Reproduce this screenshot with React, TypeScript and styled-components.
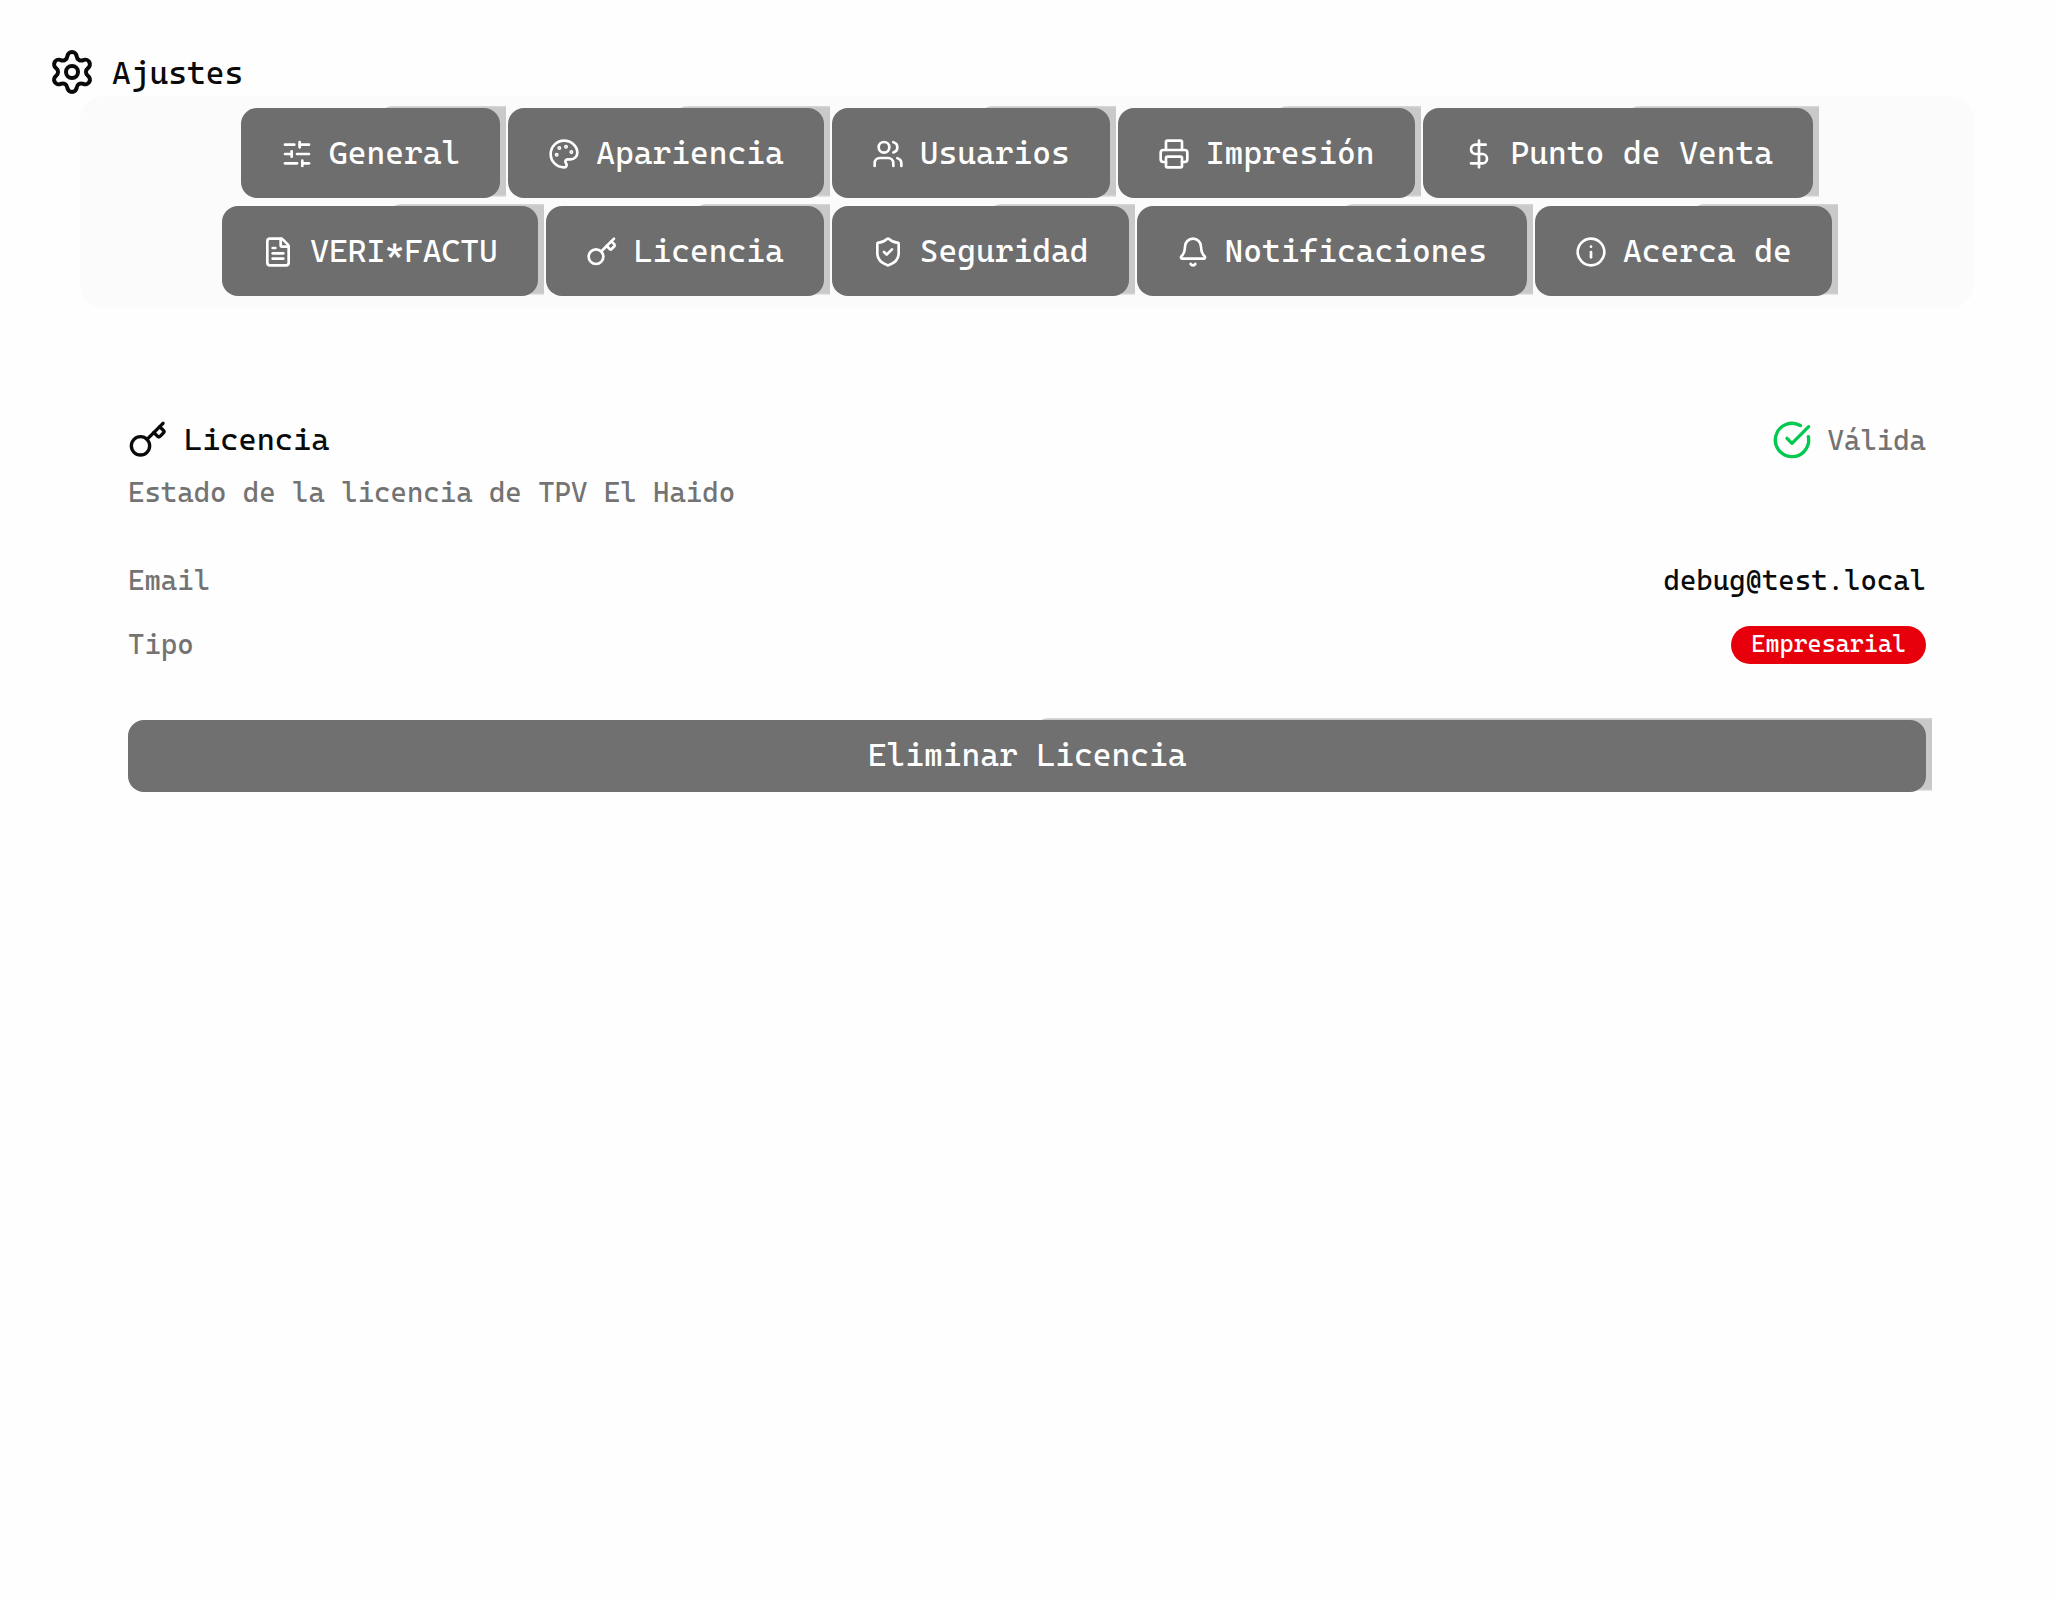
import React from 'react';
import styled, { createGlobalStyle } from 'styled-components';
import {
  Bell,
  CircleCheckBig,
  DollarSign,
  FileText,
  Info,
  Key,
  Palette,
  Printer,
  Settings,
  ShieldCheck,
  SlidersHorizontal,
  Users,
} from 'lucide-react';
import type { LucideIcon } from 'lucide-react';

const ink = '#0a0a0a';
const muted = '#737373';
const mono = "'Cascadia Mono', 'DejaVu Sans Mono', monospace";

const GlobalStyle = createGlobalStyle`
  *, *::before, *::after { box-sizing: border-box; }
  body {
    margin: 0;
    background: #fefefe;
    color: ${ink};
    font-family: ${mono};
    font-size: 28px;
    line-height: 38px;
  }
  button { font-family: inherit; }
`;

const Page = styled.main`
  min-height: 100vh;
  padding: 48px;
`;

const PageHeader = styled.header`
  display: flex;
  align-items: center;
  gap: 16px;
`;

const Title = styled.h1`
  margin: 0;
  padding-top: 2px;
  font-size: 32px;
  font-weight: 400;
  line-height: 46px;
`;

const Body = styled.div`
  padding: 0 32px;
`;

const TabBar = styled.nav`
  isolation: isolate;
  display: flex;
  flex-wrap: wrap;
  justify-content: center;
  gap: 8px;
  padding: 12px 96px;
  border-radius: 24px;
  background: #fbfbfb;
`;

const RaisedButton = styled.button`
  position: relative;
  display: flex;
  align-items: center;
  justify-content: center;
  border: 0;
  border-radius: 16px;
  background: #6e6e6e;
  color: #fff;
  font-size: 32px;
  line-height: 40px;
  cursor: pointer;

  &::before {
    content: '';
    position: absolute;
    z-index: -1;
    top: -2px;
    right: -6px;
    bottom: 1px;
    left: calc(50% + 6px);
    border-radius: 16px 0 0 16px;
    background: linear-gradient(#d8d8d8, #c9c9c9 2px, #c9c9c9 calc(100% - 2px), #ececec);
  }
`;

const Tab = styled(RaisedButton)`
  gap: 16px;
  height: 90px;
  padding: 0 40px;

  svg { margin-top: 2px; }
`;

const Card = styled.section`
  isolation: isolate;
  padding: 112px 48px 48px;
`;

const Row = styled.div`
  display: flex;
  align-items: flex-end;
  justify-content: space-between;
`;

const IconText = styled.div`
  display: flex;
  align-items: center;
  gap: 16px;
`;

const CardTitle = styled.h2`
  margin: 0;
  padding-bottom: 2px;
  font-size: 31px;
  font-weight: 400;
  line-height: 38px;
`;

const Status = styled.span`
  padding-top: 2px;
  color: ${muted};
`;

const Description = styled.p`
  margin: 12px 0 48px;
  padding-top: 2px;
  color: ${muted};
`;

const Details = styled.dl`
  display: grid;
  gap: 24px;
  margin: 0 0 56px;

  dt, dd { margin: 0; padding-top: 2px; }
  dt { color: ${muted}; }
`;

const Badge = styled.span`
  display: block;
  padding: 0 20px 2px;
  border-radius: 19px;
  background: #e7000b;
  color: #fff;
  font-size: 24px;
  line-height: 36px;
`;

const RemoveButton = styled(RaisedButton)`
  width: 100%;
  height: 72px;
  padding: 0 0 2px;
  background: #707070;
`;

const tabs: { label: string; icon: LucideIcon }[] = [
  { label: 'General', icon: SlidersHorizontal },
  { label: 'Apariencia', icon: Palette },
  { label: 'Usuarios', icon: Users },
  { label: 'Impresión', icon: Printer },
  { label: 'Punto de Venta', icon: DollarSign },
  { label: 'VERI*FACTU', icon: FileText },
  { label: 'Licencia', icon: Key },
  { label: 'Seguridad', icon: ShieldCheck },
  { label: 'Notificaciones', icon: Bell },
  { label: 'Acerca de', icon: Info },
];

export default function App() {
  return (
    <>
      <GlobalStyle />
      <Page>
        <PageHeader>
          <Settings size={48} />
          <Title>Ajustes</Title>
        </PageHeader>
        <Body>
          <TabBar>
            {tabs.map(({ label, icon: Icon }) => (
              <Tab type="button" key={label}>
                <Icon size={32} />
                {label}
              </Tab>
            ))}
          </TabBar>
          <Card>
            <Row>
              <IconText>
                <Key size={40} />
                <CardTitle>Licencia</CardTitle>
              </IconText>
              <IconText>
                <CircleCheckBig size={40} color="#00c950" />
                <Status>Válida</Status>
              </IconText>
            </Row>
            <Description>Estado de la licencia de TPV El Haido</Description>
            <Details>
              <Row>
                <dt>Email</dt>
                <dd>debug@test.local</dd>
              </Row>
              <Row>
                <dt>Tipo</dt>
                <dd>
                  <Badge>Empresarial</Badge>
                </dd>
              </Row>
            </Details>
            <RemoveButton type="button">Eliminar Licencia</RemoveButton>
          </Card>
        </Body>
      </Page>
    </>
  );
}
